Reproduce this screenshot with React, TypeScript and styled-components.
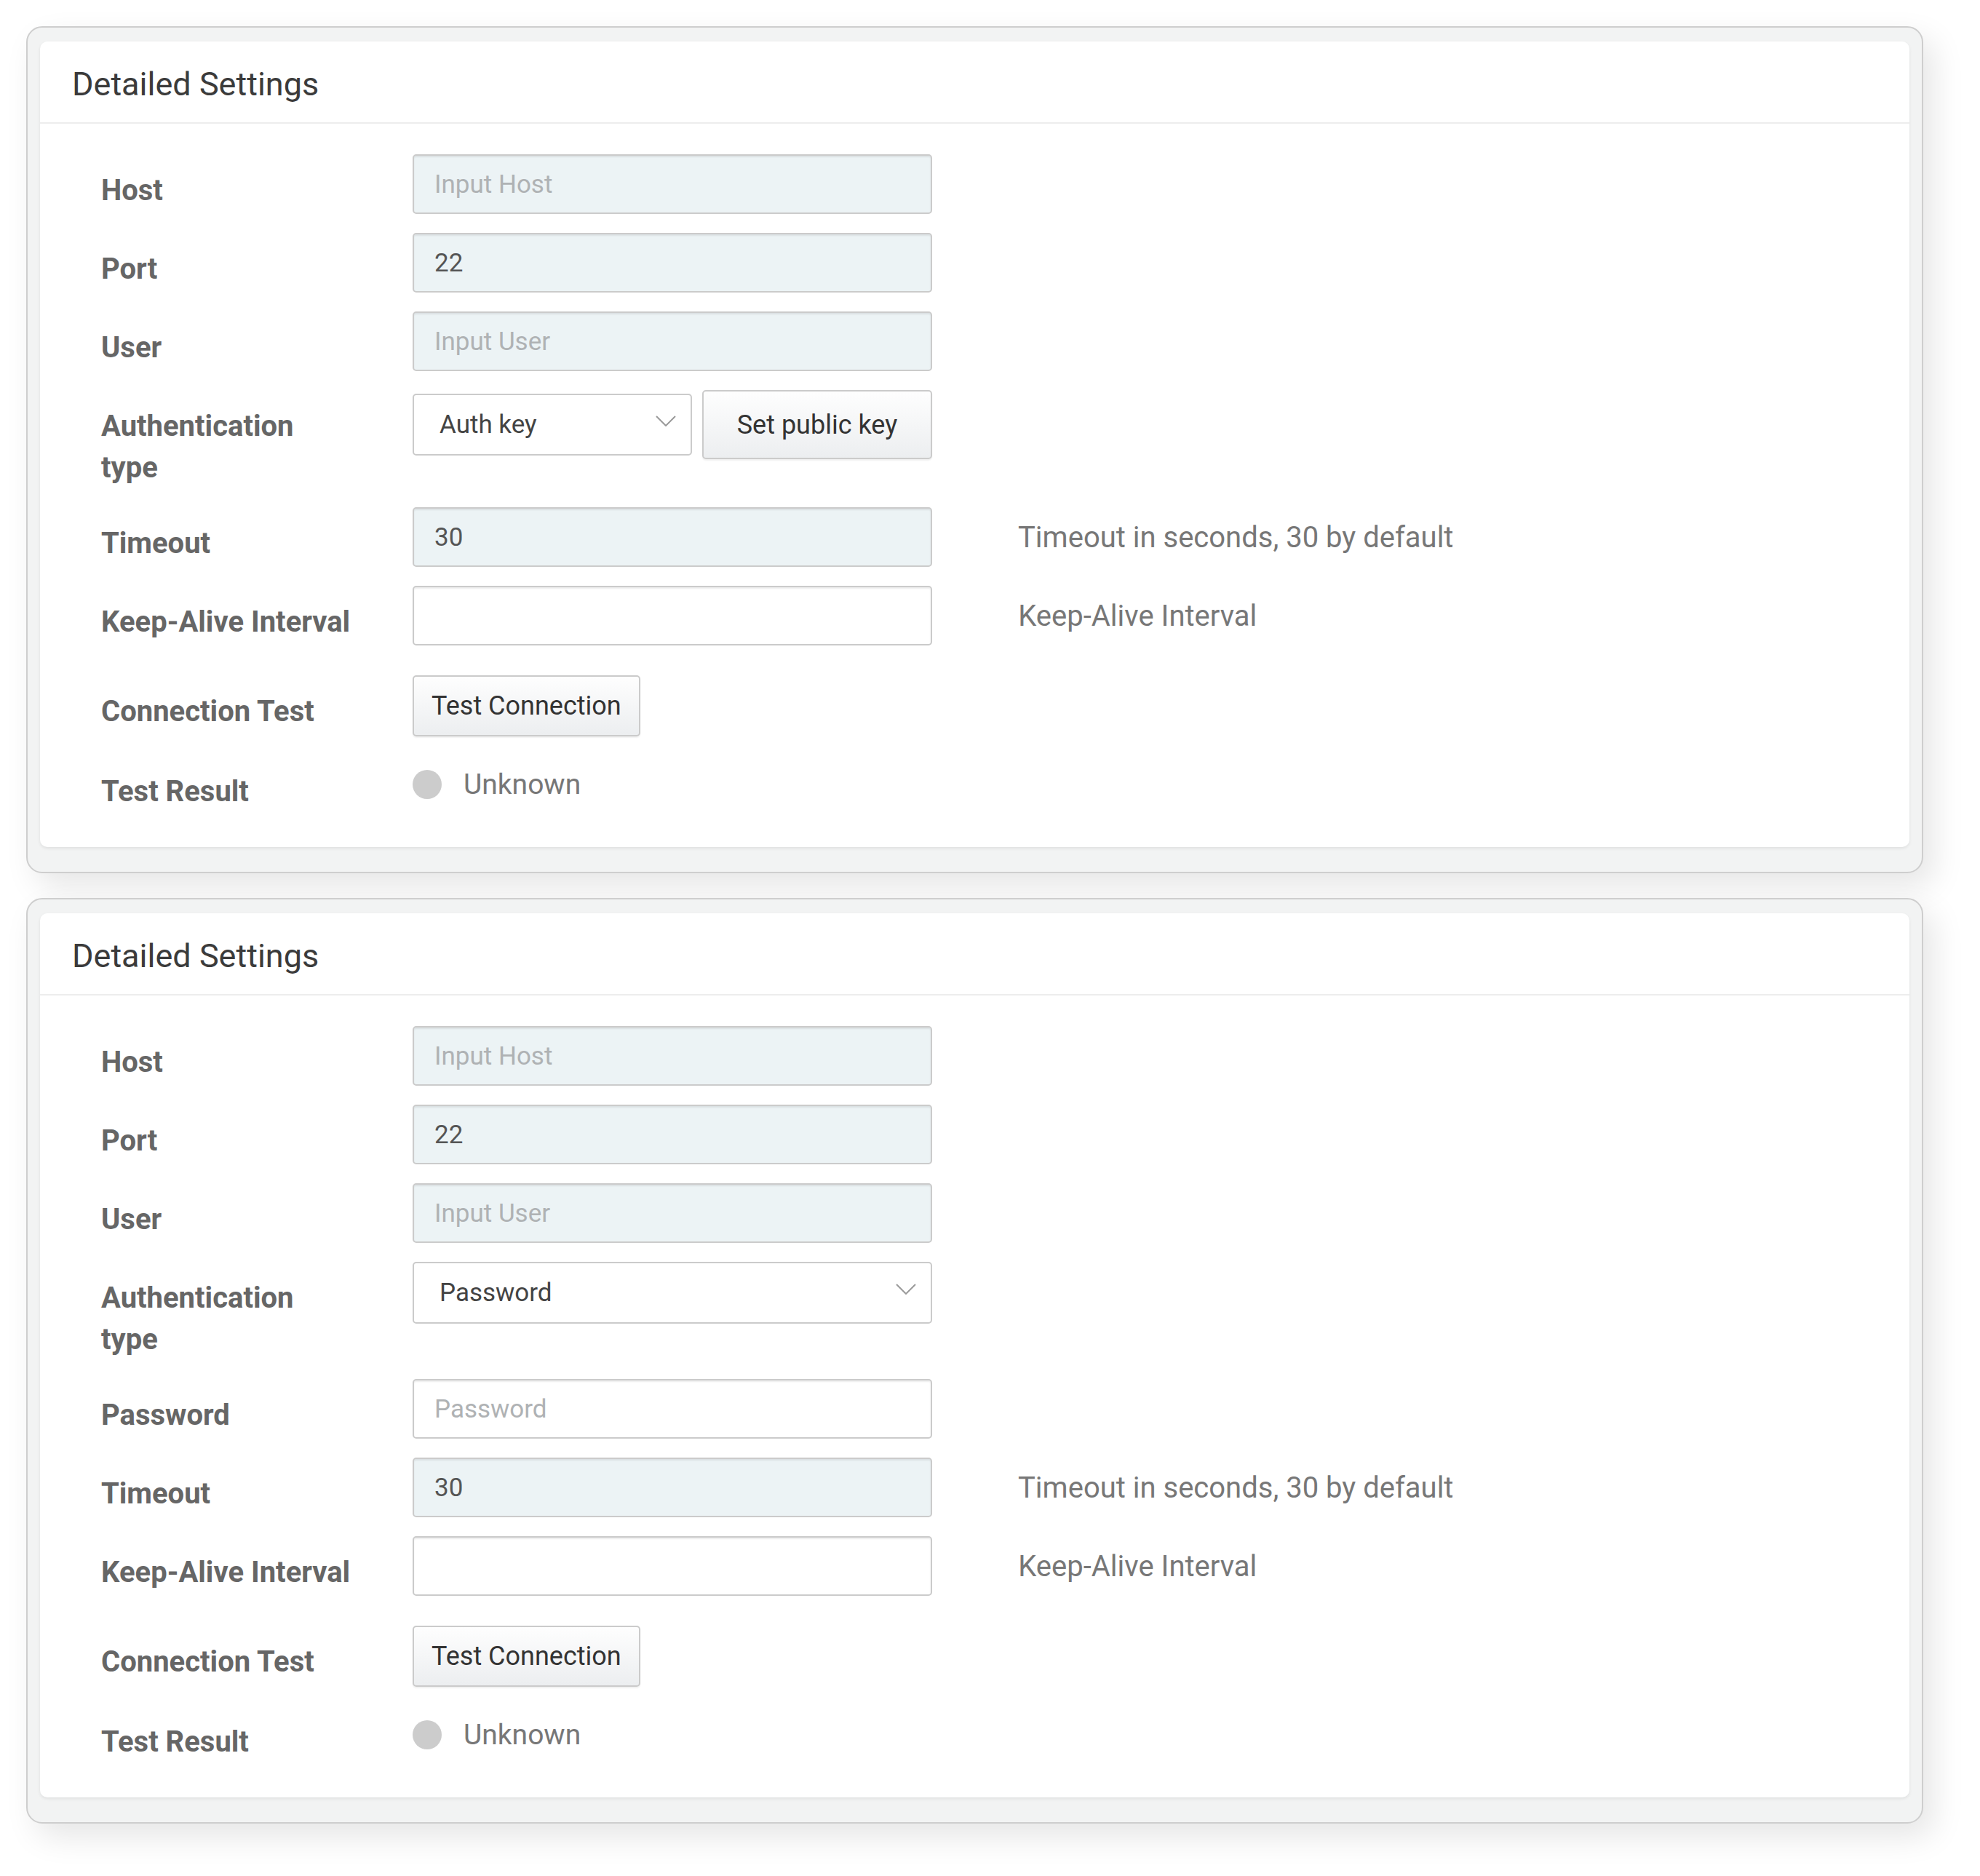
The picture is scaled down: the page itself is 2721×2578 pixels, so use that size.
import React from 'react';
import styled, { createGlobalStyle } from 'styled-components';

const GlobalStyle = createGlobalStyle`
	html, body {
		margin: 0;
		padding: 0;
		background: #ffffff;
	}
	body {
		font-family: Roboto, "Liberation Sans", sans-serif;
	}
	*, *::before, *::after {
		box-sizing: border-box;
	}
`;

const Page = styled.main`
	display: flex;
	flex-direction: column;
	gap: 34px;
	padding: 36px 78px 60px 36px;
`;

const Frame = styled.section`
	background: #f2f3f3;
	border: 2px solid #cecece;
	border-radius: 22px;
	padding: 19px 17px 34px;
	box-shadow: 14px 18px 44px rgba(0, 0, 0, 0.1);
`;

const Panel = styled.div`
	background: #ffffff;
	border-radius: 10px;
	box-shadow: 0 2px 4px rgba(0, 0, 0, 0.08);
`;

const Heading = styled.h2`
	margin: 0;
	padding: 33px 44px 26px;
	border-bottom: 2px solid #ededed;
	font-size: 45px;
	line-height: 52px;
	font-weight: 400;
	color: #3b3b3b;
`;

const Body = styled.div`
	display: flex;
	flex-direction: column;
	gap: 26px;
	padding: 42px 84px 48px;
`;

const Row = styled.div<{ $offset?: number }>`
	display: flex;
	align-items: flex-start;
	margin-top: ${({ $offset }) => $offset ?? 0}px;
`;

const Label = styled.label<{ $wrap?: boolean }>`
	flex: 0 0 342px;
	margin-right: 86px;
	padding-top: 21px;
	font-size: 40px;
	line-height: 57px;
	font-weight: 700;
	color: #666666;
	white-space: ${({ $wrap }) => ($wrap ? 'normal' : 'nowrap')};
`;

const Controls = styled.div`
	display: flex;
	align-items: center;
	gap: 14px;
	flex: 0 0 714px;
`;

const Help = styled.span`
	align-self: center;
	margin-left: 118px;
	font-size: 40px;
	color: #777777;
`;

const Field = styled.input<{ $locked?: boolean }>`
	width: 100%;
	height: 82px;
	padding: 0 28px;
	border: 2px solid #cbcbcb;
	border-radius: 5px;
	background: ${({ $locked }) => ($locked ? '#ecf3f5' : '#ffffff')};
	box-shadow: inset 0 2px 2px rgba(0, 0, 0, 0.075);
	font-family: inherit;
	font-size: 35px;
	color: #555555;
	outline: none;

	&::placeholder {
		color: #afb2b4;
	}
`;

const Select = styled.div<{ $wide?: boolean }>`
	display: flex;
	align-items: center;
	justify-content: space-between;
	flex: ${({ $wide }) => ($wide ? '1' : '0 0 384px')};
	height: 85px;
	padding: 0 20px 0 35px;
	border: 2px solid #cbcbcb;
	border-radius: 5px;
	background: #ffffff;
	font-size: 35px;
	color: #444444;
`;

const Chevron = styled.svg`
	width: 28px;
	height: 15px;
	margin-bottom: 10px;
`;

const Button = styled.button<{ $fill?: boolean; $tall?: boolean }>`
	flex: ${({ $fill }) => ($fill ? '1' : '0 0 auto')};
	height: ${({ $tall }) => ($tall ? 95 : 84)}px;
	padding: 0 24px;
	border: 2px solid #cbcbcb;
	border-radius: 5px;
	background: linear-gradient(#fefefe, #eceef0);
	box-shadow: 0 2px 2px rgba(0, 0, 0, 0.06);
	font-family: inherit;
	font-size: 36px;
	color: #333333;
`;

const Status = styled.div`
	display: flex;
	align-items: center;
	gap: 30px;
	height: 58px;
	margin-top: 11px;
	font-size: 39px;
	color: #777777;
`;

const Dot = styled.span`
	width: 40px;
	height: 40px;
	border-radius: 50%;
	background: #cccccc;
`;

type AuthMode = 'key' | 'password';

const ChevronIcon = () => (
	<Chevron viewBox="0 0 28 15">
		<polyline points="1,1 14,14 27,1" fill="none" stroke="#9a9a9a" strokeWidth="2" />
	</Chevron>
);

const SettingsPanel = ({ mode }: { mode: AuthMode }) => (
	<Frame>
		<Panel>
			<Heading>Detailed Settings</Heading>
			<Body>
				<Row>
					<Label>Host</Label>
					<Controls>
						<Field $locked readOnly placeholder="Input Host" />
					</Controls>
				</Row>
				<Row>
					<Label>Port</Label>
					<Controls>
						<Field $locked readOnly defaultValue="22" />
					</Controls>
				</Row>
				<Row>
					<Label>User</Label>
					<Controls>
						<Field $locked readOnly placeholder="Input User" />
					</Controls>
				</Row>
				<Row>
					<Label $wrap>Authentication type</Label>
					{mode === 'key' ? (
						<Controls>
							<Select>
								Auth key
								<ChevronIcon />
							</Select>
							<Button $fill $tall>
								Set public key
							</Button>
						</Controls>
					) : (
						<Controls>
							<Select $wide>
								Password
								<ChevronIcon />
							</Select>
						</Controls>
					)}
				</Row>
				{mode === 'password' && (
					<Row>
						<Label>Password</Label>
						<Controls>
							<Field type="password" placeholder="Password" />
						</Controls>
					</Row>
				)}
				<Row>
					<Label>Timeout</Label>
					<Controls>
						<Field $locked readOnly defaultValue="30" />
					</Controls>
					<Help>Timeout in seconds, 30 by default</Help>
				</Row>
				<Row>
					<Label>Keep-Alive Interval</Label>
					<Controls>
						<Field />
					</Controls>
					<Help>Keep-Alive Interval</Help>
				</Row>
				<Row $offset={15}>
					<Label>Connection Test</Label>
					<Controls>
						<Button>Test Connection</Button>
					</Controls>
				</Row>
				<Row>
					<Label>Test Result</Label>
					<Status>
						<Dot />
						Unknown
					</Status>
				</Row>
			</Body>
		</Panel>
	</Frame>
);

const App = () => (
	<>
		<GlobalStyle />
		<Page>
			<SettingsPanel mode="key" />
			<SettingsPanel mode="password" />
		</Page>
	</>
);

export default App;
